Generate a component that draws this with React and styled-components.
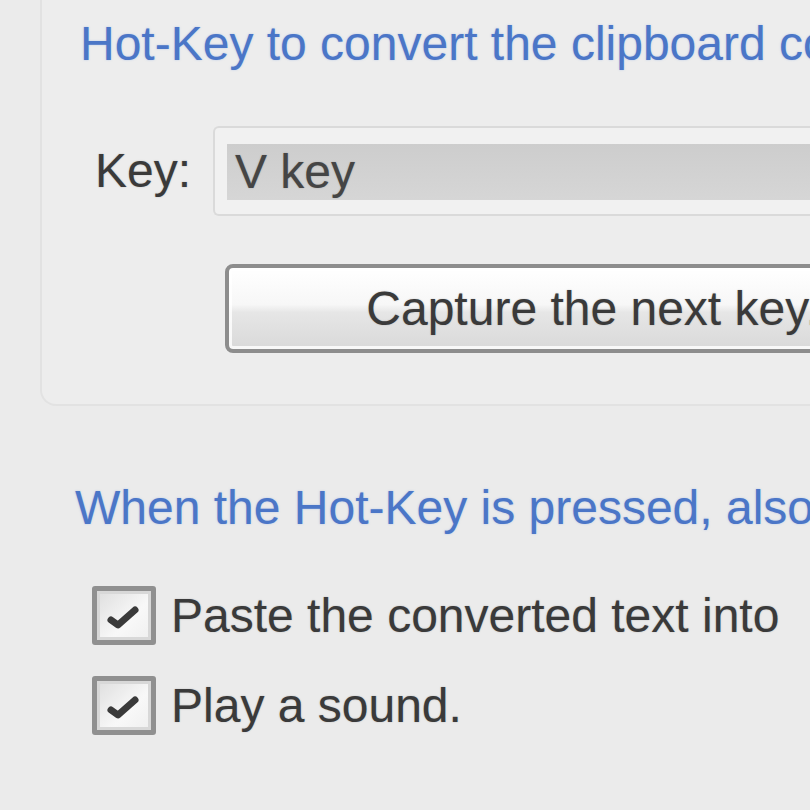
import React from "react";
import styled, { createGlobalStyle } from "styled-components";

const GlobalStyle = createGlobalStyle`
  html, body {
    margin: 0;
    padding: 0;
    background: #ebebeb;
    overflow: hidden;
  }
  body {
    font-family: "Liberation Sans", Arial, sans-serif;
    font-size: 48px;
    color: #3a3a3a;
  }
`;

const Page = styled.div`
  width: 1100px;
  height: 810px;
  display: flex;
  flex-direction: column;
  text-shadow: 0 0 1.5px rgba(60, 60, 60, 0.35);
`;

const Group = styled.section`
  margin-left: 40px;
  border: 2px solid #e2e2e2;
  border-top: none;
  border-radius: 0 0 0 16px;
  background: #ededed;
  padding-bottom: 51px;
  display: flex;
  flex-direction: column;
`;

const Heading = styled.div`
  color: #4b76c7;
  line-height: 48px;
  white-space: nowrap;
  text-shadow: 0 0 2px rgba(120, 160, 230, 0.5);
  margin-left: ${(p) => p.$indent}px;
  margin-top: ${(p) => p.$top}px;
`;

const KeyRow = styled.div`
  display: flex;
  align-items: center;
  margin-top: 58px;
  margin-left: 53px;
  gap: 22px;
`;

const Label = styled.span`
  line-height: 48px;
  width: 96px;
  white-space: nowrap;
`;

const KeyField = styled.div`
  width: 900px;
  height: 90px;
  box-sizing: border-box;
  border: 2px solid #dadada;
  border-right: none;
  border-radius: 6px 0 0 6px;
  background: #f1f1f1;
  padding: 16px 0 14px 12px;
  display: flex;
`;

const KeyValue = styled.div`
  flex: 1;
  background: linear-gradient(#cdcdcd, #d6d6d6);
  line-height: 56px;
  padding-left: 8px;
  color: #454545;
  white-space: nowrap;
`;

const ButtonRow = styled.div`
  display: flex;
  margin-top: 48px;
  margin-left: 183px;
`;

const CaptureButton = styled.button`
  width: 762px;
  height: 89px;
  box-sizing: border-box;
  border: 4px solid #8d8d8d;
  border-radius: 8px;
  background: linear-gradient(#ffffff 0%, #f7f7f7 45%, #e6e6e6 55%, #d9d9d9 100%);
  box-shadow: inset 0 0 0 3px rgba(255, 255, 255, 0.8);
  font-family: "Liberation Sans", Arial, sans-serif;
  font-size: 48px;
  color: #3a3a3a;
  text-shadow: 0 0 1.5px rgba(60, 60, 60, 0.35);
  line-height: 48px;
  white-space: nowrap;
  padding: 0;
  display: flex;
  align-items: center;
  justify-content: center;
`;

const Options = styled.div`
  display: flex;
  flex-direction: column;
  gap: 31px;
  margin-top: 54px;
  margin-left: 92px;
`;

const OptionRow = styled.label`
  display: flex;
  align-items: center;
  gap: 15px;
  height: 59px;
  white-space: nowrap;
  line-height: 48px;
`;

const Box = styled.span`
  width: 64px;
  height: 59px;
  box-sizing: border-box;
  border: 5px solid #909090;
  border-radius: 3px;
  background: linear-gradient(135deg, #dedede, #f8f8f8 60%, #efefef);
  box-shadow: inset 0 0 0 3px #d8d8d8;
  display: flex;
  align-items: center;
  justify-content: center;
  flex-shrink: 0;
`;

const Check = () => (
  <svg width="40" height="34" viewBox="0 0 40 34">
    <path
      d="M7 21 L14 26 L31 11"
      fill="none"
      stroke="#3a3a3a"
      strokeWidth="7"
      strokeLinecap="round"
      strokeLinejoin="round"
    />
  </svg>
);

const Option = ({ children }) => (
  <OptionRow>
    <Box>
      <Check />
    </Box>
    <span>{children}</span>
  </OptionRow>
);

export default function App() {
  return (
    <>
      <GlobalStyle />
      <Page>
        <Group>
          <Heading $indent={38} $top={20}>
            Hot-Key to convert the clipboard contents
          </Heading>
          <KeyRow>
            <Label>Key:</Label>
            <KeyField>
              <KeyValue>V key</KeyValue>
            </KeyField>
          </KeyRow>
          <ButtonRow>
            <CaptureButton>Capture the next key...</CaptureButton>
          </ButtonRow>
        </Group>
        <Heading $indent={75} $top={78}>
          When the Hot-Key is pressed, also
        </Heading>
        <Options>
          <Option>Paste the converted text into</Option>
          <Option>Play a sound.</Option>
        </Options>
      </Page>
    </>
  );
}
